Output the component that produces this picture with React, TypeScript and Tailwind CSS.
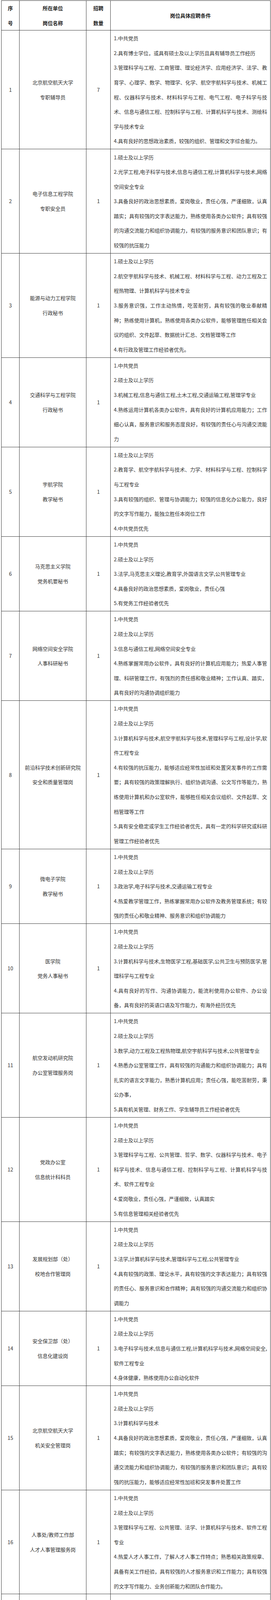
import React from 'react';

type Row = { no: number; unit: string; post: string; count: number; items: string[][] };

// each inner array is one numbered requirement, split into the visual lines of the original
const rows: Row[] = [
  {
    no: 1, unit: '北京航空航天大学', post: '专职辅导员', count: 7,
    items: [
      ['1.中共党员'],
      ['2.具有博士学位，或具有硕士及以上学历且具有辅导员工作经历'],
      [
        '3.管理科学与工程、工商管理、理论经济学、应用经济学、法学、教',
        '育学、心理学、数学、物理学、化学、航空宇航科学与技术、机械工',
        '程、仪器科学与技术、材料科学与工程、电气工程、电子科学与技',
        '术、信息与通信工程、控制科学与工程、计算机科学与技术、测绘科',
        '学与技术专业',
      ],
      ['4.具有良好的思想政治素质，较强的组织、管理和文字综合能力。'],
    ],
  },
  {
    no: 2, unit: '电子信息工程学院', post: '专职安全员', count: 1,
    items: [
      ['1.硕士及以上学历'],
      ['2.光学工程,电子科学与技术,信息与通信工程,计算机科学与技术,网络', '空间安全专业'],
      [
        '3.具备良好的政治思想素质，爱岗敬业，责任心强，严谨细致，认真',
        '踏实；具有较强的文字表达能力，熟练使用各类办公软件；具有较强',
        '的沟通交流能力和组织协调能力，有较强的服务意识和团队意识；有',
        '较强的抗压能力',
      ],
    ],
  },
  {
    no: 3, unit: '能源与动力工程学院', post: '行政秘书', count: 1,
    items: [
      ['1.硕士及以上学历'],
      ['2.航空宇航科学与技术、机械工程、材料科学与工程、动力工程及工', '程热物理、计算机科学与技术专业'],
      [
        '3.服务意识强，工作主动热情，吃苦耐劳，具有较强的敬业奉献精',
        '神；熟练使用计算机，熟练使用各类办公软件，能够管理胜任相关会',
        '议的组织、文件起草、数据统计汇总、文档管理等工作',
      ],
      ['4.有行政及管理工作经验者优先。'],
    ],
  },
  {
    no: 4, unit: '交通科学与工程学院', post: '行政秘书', count: 1,
    items: [
      ['1.中共党员'],
      ['2.硕士及以上学历'],
      ['3.机械工程,信息与通信工程,土木工程,交通运输工程,管理学专业'],
      [
        '4.熟练运用计算机各类办公软件，具有良好的计算机应用能力；工作',
        '细心认真，服务意识和服务态度良好，有较强的责任心与沟通交流能',
        '力',
      ],
    ],
  },
  {
    no: 5, unit: '宇航学院', post: '教学秘书', count: 1,
    items: [
      ['1.硕士及以上学历'],
      ['2.教育学、航空宇航科学与技术、力学、材料科学与工程、控制科学', '与工程专业'],
      ['3.具有较强的组织、管理与协调能力；较强的信息化办公能力，良好', '的文字写作能力，能独立胜任本岗位工作'],
      ['4.中共党员优先'],
    ],
  },
  {
    no: 6, unit: '马克思主义学院', post: '党务机要秘书', count: 1,
    items: [
      ['1.中共党员'],
      ['2.硕士及以上学历'],
      ['3.法学,马克思主义理论,教育学,外国语言文学,公共管理专业'],
      ['4.具备良好的政治思想素质，爱岗敬业，责任心强'],
      ['5.有党务工作经验者优先'],
    ],
  },
  {
    no: 7, unit: '网络空间安全学院', post: '人事科研秘书', count: 1,
    items: [
      ['1.中共党员'],
      ['2.硕士及以上学历'],
      ['3.信息与通信工程,网络空间安全专业'],
      [
        '4.熟练掌握常用办公软件，具有良好的计算机应用能力；热爱人事管',
        '理、科研管理工作，有强烈的责任感和敬业精神；工作认真、踏实，',
        '具有良好的沟通协调组织能力',
      ],
    ],
  },
  {
    no: 8, unit: '前沿科学技术创新研究院', post: '安全和质量管理岗', count: 1,
    items: [
      ['1.中共党员'],
      ['2.硕士及以上学历'],
      ['3.计算机科学与技术,航空宇航科学与技术,管理科学与工程,设计学,软', '件工程专业'],
      [
        '4.有较强的抗压能力，能够适应经常性加班和处置突发事件的工作需',
        '要；具有较强的政策理解执行、组织协调沟通、公文写作等能力，熟',
        '练使用计算机和办公室软件，能够胜任相关会议组织、文件起草、文',
        '档管理等工作',
      ],
      ['5.具有安全稳定或学生工作经验者优先，具有一定的科学研究或科研', '管理工作经验者优先'],
    ],
  },
  {
    no: 9, unit: '微电子学院', post: '教学秘书', count: 1,
    items: [
      ['1.中共党员'],
      ['2.硕士及以上学历'],
      ['3.政治学,电子科学与技术,交通运输工程专业'],
      ['4.热爱教学管理工作，熟练掌握常用办公软件及教务管理系统；有较', '强的责任心和敬业精神、服务意识和组织协调能力'],
    ],
  },
  {
    no: 10, unit: '医学院', post: '党务人事秘书', count: 1,
    items: [
      ['1.中共党员'],
      ['2.硕士及以上学历'],
      ['3.计算机科学与技术,生物医学工程,基础医学,公共卫生与预防医学,管', '理科学与工程专业'],
      ['4.具有良好的写作、沟通协调能力，能流利使用办公软件、办公设', '备，具有良好的英语口语及写作能力，有海外经历优先'],
    ],
  },
  {
    no: 11, unit: '航空发动机研究院', post: '办公室管理服务岗', count: 1,
    items: [
      ['1.中共党员'],
      ['2.硕士及以上学历'],
      ['3.数学,动力工程及工程热物理,航空宇航科学与技术,公共管理专业'],
      [
        '4.熟悉办公室管理工作，具有较强的沟通能力和组织协调能力；具有',
        '扎实的语言文字能力，熟悉计算机应用；责任心强，能吃苦耐劳，秉',
        '公办事，',
      ],
      ['5.具有机关管理、财务工作、学生辅导员工作经验者优先'],
    ],
  },
  {
    no: 12, unit: '党政办公室', post: '信息统计科科员', count: 1,
    items: [
      ['1.中共党员'],
      ['2.硕士及以上学历'],
      [
        '3.管理科学与工程、公共管理、哲学、数学、仪器科学与技术、电子',
        '科学与技术、信息与通信工程、控制科学与工程、计算机科学与技',
        '术、软件工程专业',
      ],
      ['4.爱岗敬业，责任心强，严谨细致，认真踏实'],
      ['5.有信息管理相关经验者优先'],
    ],
  },
  {
    no: 13, unit: '发展规划部（处）', post: '校地合作管理岗', count: 1,
    items: [
      ['1.中共党员'],
      ['2.硕士及以上学历'],
      ['3.法学,计算机科学与技术,管理科学与工程,公共管理专业'],
      [
        '4.具有较强的政策、理论水平，具有较强的文字表达能力；具有较强',
        '的责任心、服务意识和合作精神；具有较强的沟通交流能力和组织协',
        '调能力',
      ],
    ],
  },
  {
    no: 14, unit: '安全保卫部（处）', post: '信息化建设岗', count: 1,
    items: [
      ['1.中共党员'],
      ['2.硕士及以上学历'],
      ['3.电子科学与技术,信息与通信工程,计算机科学与技术,网络空间安全,', '软件工程专业'],
      ['4.身体健康，熟练使用办公自动化软件'],
    ],
  },
  {
    no: 15, unit: '北京航空航天大学', post: '机关安全管理岗', count: 1,
    items: [
      ['1.中共党员'],
      ['2.硕士及以上学历'],
      ['3.计算机科学与技术'],
      [
        '4.具备良好的政治思想素质，爱岗敬业，责任心强，严谨细致，认真',
        '踏实；有较强的文字表达能力，熟练使用各类办公软件；有较强的沟',
        '通交流能力和组织协调能力，有较强的服务意识和团队意识；具有较',
        '强的抗压能力，能够适应经常性加班和突发事件处置工作',
      ],
    ],
  },
  {
    no: 16, unit: '人事处/教师工作部', post: '人才人事管理服务岗', count: 1,
    items: [
      ['1.中共党员'],
      ['2.硕士及以上学历'],
      ['3.管理科学与工程、公共管理、法学、计算机科学与技术、软件工程', '专业'],
      [
        '4.热爱人才人事工作，了解人才人事工作特点；熟悉相关政策规章、',
        '具备有关工作经验，具有较强的人才服务意识和工作能力；具有较强',
        '的文字写作能力、业务创新能力和团队合作能力。',
      ],
    ],
  },
  {
    no: 17, unit: '财务处', post: '信息管理岗', count: 1,
    items: [
      ['1.中共党员'],
      ['2.硕士及以上学历'],
      ['3.计算机科学与技术,软件工程专业'],
      ['4.具有信息系统开发、维护经验；政治素质高，沟通能力强'],
      ['5.文字功底扎实者优先'],
    ],
  },
  {
    no: 18, unit: '财务处', post: '会计核算岗', count: 1,
    items: [
      ['1.中共党员'],
      ['2.硕士及以上学历'],
      ['3.工商管理专业'],
      ['4.政治素质高，沟通能力强'],
      ['5.文字功底扎实者优先'],
    ],
  },
  {
    no: 19, unit: '科学技术研究院', post: '产学研合作管理岗', count: 1,
    items: [
      ['1.中共党员'],
      ['2.硕士及以上学历'],
      ['3.管理学、法学、航空宇航科学与技术、电子科学与技术、信息与通', '信工程专业'],
      ['4.具备良好的思想政治素质，爱岗敬业，踏实认真，责任心强，有较', '好的团队合作和沟通能力'],
      ['5.具有科研项目管理工作经历者优先'],
    ],
  },
  {
    no: 20, unit: '校园规划建设与资产管理处', post: '工程管理岗', count: 2,
    items: [
      ['1.硕士及以上学历'],
      ['2.动力工程及工程热物理,电气工程,建筑学,土木工程专业'],
      [
        '3.具有良好的思想品德，公道正派、勤政廉洁、坚持原则、依法办',
        '事；热爱工程管理工作，服务意识强，能吃苦耐劳，工作主动热情，',
        '具有较强的敬业奉献精神；能够操作CAD工程制图软件，具备较好的',
        '公文写作能力和组织协调能力',
      ],
      ['4.具有工程管理相关工作经验者优先'],
    ],
  },
  {
    no: 21, unit: '巡察工作领导小组办公室', post: '巡察干部', count: 1,
    items: [
      ['1.中共党员'],
      ['2.硕士及以上学历'],
      ['3.经济学,法学,管理学专业'],
      [
        '4.了解、熟悉党章党规党纪以及国家有关法律法规，能独立胜任本岗',
        '位工作，有较高的政治觉悟和党性原则，有较强的责任心和服务意',
        '识；具有较强的文字表达能力，能熟练运用网络及计算机办公软件，',
        '具有较强的团队合作意识和沟通协调能力；具有良好的身体条件和心',
        '理抗压素质，吃苦耐劳',
      ],
    ],
  },
  {
    no: 22, unit: '实验室建设与管理处', post: '实验室综合管理岗', count: 1,
    items: [
      ['1.硕士及以上学历'],
      ['2.物理学,系统科学,信息与通信工程,航空宇航科学与技术,环境科学与', '工程专业'],
      [
        '3.具备良好的政治思想素质，爱岗敬业，认真踏实，有较好的团队协',
        '作、敢于奉献的精神；有较强的组织、管理、沟通能力和服务意识；',
        '具有较高的计算机水平，熟练应用办公软件',
      ],
      ['4.具有一定的实验室和科研管理工作经验者优先'],
    ],
  },
  {
    no: 23, unit: '实验室建设与管理处', post: '实验室安全管理岗', count: 1,
    items: [
      ['1.硕士及以上学历'],
      ['2.物理学,化学,材料科学与工程,化学工程与技术'],
      ['3.具备良好的思想政治素质，爱岗敬业，踏实认真，责任心强，有较', '好的团队合作和沟通能力'],
      ['4.安全工程、化工、环境工程等学科背景优先考虑'],
    ],
  },
];

function Conditions({ items }: { items: string[][] }) {
  return (
    <div className="flex-1 px-2 py-[1.25px] border-r border-[#3a3a3a]">
      {items.map((item, i) =>
        item.map((line, j) => (
          <div
            key={`${i}-${j}`}
            className={`h-[37.6px] leading-[37.6px] whitespace-nowrap ${
              j < item.length - 1 ? 'text-justify [text-align-last:justify]' : ''
            }`}
          >
            {line}
          </div>
        ))
      )}
    </div>
  );
}

export default function App() {
  return (
    <div className="min-h-screen bg-white pt-[1px] pl-[3px] text-[13px] text-[#333] font-['Noto_Sans_CJK_SC','Liberation_Sans',sans-serif]">
      <div className="w-[689px] border-l border-t border-[#3a3a3a]">
        {/* header */}
        <div className="flex h-[76px] border-b border-[#3a3a3a] font-bold text-[#222] leading-[38px]">
          <div className="w-[46px] flex flex-col items-center justify-center border-r border-[#3a3a3a]">
            <span>序</span>
            <span>号</span>
          </div>
          <div className="w-[171px] flex flex-col items-center justify-center border-r border-[#3a3a3a]">
            <span>所在单位</span>
            <span>岗位名称</span>
          </div>
          <div className="w-[62px] flex flex-col items-center justify-center border-r border-[#3a3a3a]">
            <span>招聘</span>
            <span>数量</span>
          </div>
          <div className="flex-1 flex items-center justify-center border-r border-[#3a3a3a]">
            岗位具体应聘条件
          </div>
        </div>

        {rows.map((row) => (
          <div key={row.no} className="flex border-b border-[#3a3a3a]">
            <div className="w-[46px] flex items-center justify-center border-r border-[#3a3a3a]">
              {row.no}
            </div>
            <div className="w-[171px] flex flex-col items-center justify-center border-r border-[#3a3a3a] leading-[37.6px]">
              <span>{row.unit}</span>
              <span>{row.post}</span>
            </div>
            <div className="w-[62px] flex items-center justify-center border-r border-[#3a3a3a]">
              {row.count}
            </div>
            <Conditions items={row.items} />
          </div>
        ))}
      </div>
    </div>
  );
}
